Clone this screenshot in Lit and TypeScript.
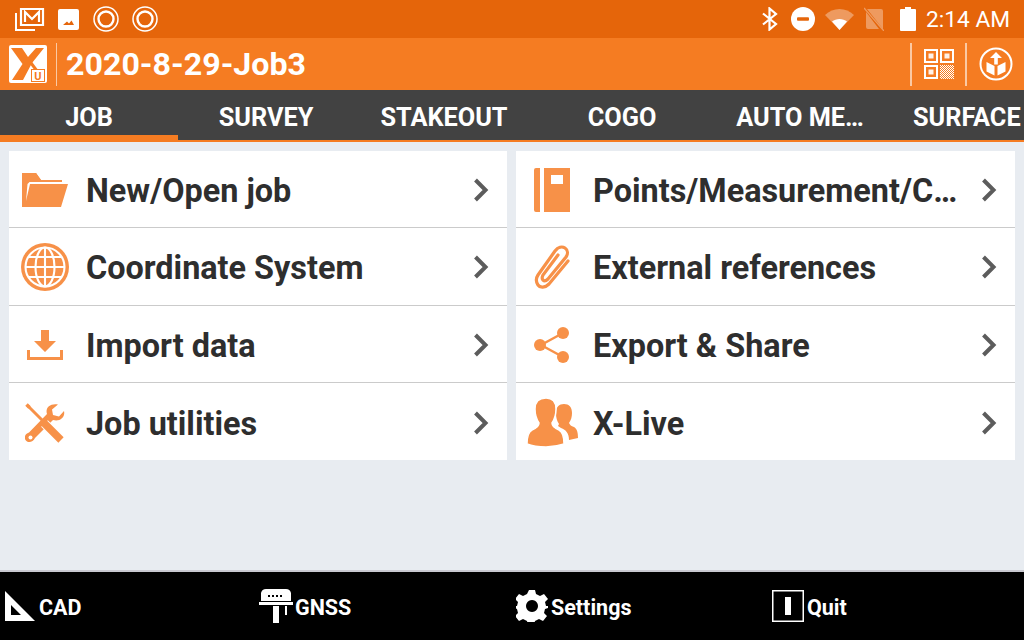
import { LitElement, html, css, svg } from "lit";
import { customElement } from "lit/decorators.js";

const ICONS: Record<string, unknown> = {
  folder: svg`<svg width="48" height="36" viewBox="0 0 48 36"><path fill="#f79148" d="M1 1h14l5 7h21v2H8.500L6.500 12 5 29 9 12h38l-7 23H1z"/><path fill="#f79148" d="M1 1h14l5 7h20v2H8L5.500 11 4 26 1 35z"/></svg>`,
  globe: svg`<svg width="48" height="48" viewBox="0 0 48 48"><circle cx="24" cy="24" r="24" fill="#f79148"/><g fill="none" stroke="#fff" stroke-width="2.100"><circle cx="24" cy="24" r="19.500"/><ellipse cx="24" cy="24" rx="9.500" ry="19.500"/><path d="M24 5v38M5 24h38M8 14h32M8 34h32"/></g></svg>`,
  download: svg`<svg width="38" height="32" viewBox="0 0 38 32"><path fill="#f79148" d="M15 1h8v11h7L19 23 8 12h7zM1 21h3v7h30v-7h3v10H1z"/></svg>`,
  tools: svg`<svg width="40" height="40" viewBox="0 0 40 40">
    <path fill="#f79148" d="M39 8c1.500 6-4 11-11 9L10 35c-2 5-8 5-9.500 2S0 31 4 29.500L22 11C20 5 25 0 33 1.500l-6 5 1 5.500 6 1.500z"/>
    <circle cx="5.500" cy="34.500" r="2" fill="#fff"/>
    <path fill="none" stroke="#fff" stroke-width="9.500" d="M19.500 20.500 37 38"/>
    <path fill="none" stroke="#f79148" stroke-width="3" stroke-linecap="round" d="M3 3l16 16"/>
    <path fill="none" stroke="#f79148" stroke-width="3.500" d="M1.500 1.500l3 3"/>
    <path fill="none" stroke="#f79148" stroke-width="7.500" d="M18.500 19.500 36 37"/>
  </svg>`,
  book: svg`<svg width="36" height="44" viewBox="0 0 36 44"><path fill="#f79148" fill-rule="evenodd" d="M2 0h4v44H2q-2 0-2-2V2q0-2 2-2zM10 0h26v44H10zM17 7v9h12V7z"/></svg>`,
  clip: svg`<svg width="36" height="44" viewBox="0 0 36 44"><path fill="none" stroke="#f79148" stroke-width="3.200" stroke-linecap="round" d="M34 16 15 39c-4 4-9 4-11 1s-2-7 0-10L21 6c3-4 7-5 10-3s3 6 1 9L14 34c-2 2-4 2-5 1s-1-3 0-5l15-20"/></svg>`,
  share: svg`<svg width="36" height="38" viewBox="0 0 36 38"><path fill="none" stroke="#f79148" stroke-width="2.400" d="M29 7 7 19l22 12"/><g fill="#f79148"><circle cx="29" cy="7" r="6"/><circle cx="6" cy="19" r="6"/><circle cx="29" cy="31" r="6"/></g></svg>`,
  people: svg`<svg width="52" height="49" viewBox="0 0 52 49"><path fill="#f79148" d="M38 6c5 0 8 3 8 9 0 4-1 7-3 10 1 2 2 3 5 4 3 2 4 5 4 11l-9 2c0-7-3-10-8-12l-3-2 1-2c-2-3-3-6-3-11 0-6 3-9 8-9z"/><path fill="#f79148" stroke="#fff" stroke-width="1.500" d="M20 0c6 0 10 4 10 11 0 6-2 11-4 14 0 3 2 5 7 7 4 2 5 7 5 14-6 2-12 3-18 3-7 0-14-1-19-3 0-7 1-12 5-14 5-2 7-4 7-7-2-3-4-8-4-14 0-7 4-11 11-11z"/></svg>`,
};

const LEFT = [
  { icon: "folder", label: "New/Open job" },
  { icon: "globe", label: "Coordinate System" },
  { icon: "download", label: "Import data" },
  { icon: "tools", label: "Job utilities" },
];
const RIGHT = [
  { icon: "book", label: "Points/Measurement/C…" },
  { icon: "clip", label: "External references" },
  { icon: "share", label: "Export & Share" },
  { icon: "people", label: "X-Live" },
];
const TABS = ["JOB", "SURVEY", "STAKEOUT", "COGO", "AUTO ME…", "SURFACE"];

@customElement("app-root")
export class AppRoot extends LitElement {
  static styles = css`
    :host {
      display: flex;
      flex-direction: column;
      width: 1024px;
      height: 640px;
      overflow: hidden;
      background: #e8ecf1;
      font-family: Roboto, "Liberation Sans", sans-serif;
      color: #fff;
    }
    .status {
      height: 38px;
      background: #e5650a;
      display: flex;
      align-items: center;
      padding: 0 14px 0 15px;
    }
    .status svg { display: block; }
    .status .left { display: flex; align-items: center; gap: 12.5px; flex: 1; }
    .status .right { display: flex; align-items: center; gap: 10px; }
    .status .right .bt { margin-right: 3px; }
    .status .right .sim { margin-right: 6px; }
    .status .img { margin-right: 2px; }
    .time { font-size: 22.7px; }
    .header {
      height: 52px;
      background: #f57c22;
      display: flex;
      align-items: center;
      padding-left: 9px;
    }
    .title {
      flex: 1;
      font-size: 32.2px;
      font-weight: 700;
      padding-left: 9px;
      margin-left: 9px;
      border-left: 1px solid #fbc9a3;
      line-height: 43px;
    }
    .action {
      width: 55px;
      height: 43px;
      border-left: 2px solid #fbc9a3;
      box-sizing: border-box;
      display: flex;
      align-items: center;
      justify-content: center;
    }
    .action.last { width: 59px; }
    .tabs {
      height: 50px;
      background: #424242;
      display: flex;
      border-bottom: 2px solid #f57c22;
    }
    .tab {
      width: 178px;
      flex: none;
      box-sizing: border-box;
      height: 50px;
      display: flex;
      align-items: center;
      justify-content: center;
      font-size: 25.3px;
      font-weight: 700;
      white-space: nowrap;
      padding: 4px 2px 0 0;
    }
    .tab.active { border-bottom: 5px solid #f57c22; padding: 9px 0 0; }
    .tab:last-child { width: 134px; justify-content: flex-start; padding-left: 23px; }
    .content {
      flex: 1;
      display: grid;
      grid-template-columns: 498px 499px;
      gap: 9px;
      padding: 9px 9px 0;
      align-items: start;
    }
    .card { background: #fff; display: flex; flex-direction: column; }
    .row {
      height: 77.33px;
      box-sizing: border-box;
      display: flex;
      align-items: center;
      border-bottom: 1px solid #cbcbcb;
      color: #2e2e2e;
      padding-top: 2px;
    }
    .row:last-child { border-bottom: none; }
    .icon {
      width: 77px;
      flex: none;
      display: flex;
      align-items: center;
      justify-content: center;
      padding-right: 5px;
      box-sizing: border-box;
    }
    .label {
      flex: 1;
      min-width: 0;
      font-size: 32.4px;
      font-weight: 700;
      white-space: nowrap;
      padding-top: 2px;
    }
    .chev { width: 52px; flex: none; display: flex; justify-content: center; }
    .footer {
      height: 68px;
      background: #000;
      display: flex;
      font-size: 21.5px;
      font-weight: 700;
      border-top: 2px solid #c9c9d0;
      margin-top: -2px;
    }
    .foot {
      width: 256px;
      flex: none;
      box-sizing: border-box;
      padding-left: 4px;
      display: flex;
      align-items: center;
      gap: 3px;
    }
    .foot.gnss { padding-left: 3px; gap: 2px; }
    .foot span { padding-top: 2px; }
  `;

  private statusLeft() {
    return svg`
      <svg width="30" height="24" viewBox="0 0 30 24"><g fill="none" stroke="#fff"><path stroke-width="2.200" d="M6 2h22v16H6zM10 15V5l7 7 7-7v10"/><path stroke-width="2" d="M1 6v17h19"/></g></svg>
      <svg class="img" width="21" height="21" viewBox="0 0 21 21"><path fill="#fff" fill-rule="evenodd" d="M2 0h17q2 0 2 2v17q0 2-2 2H2q-2 0-2-2V2q0-2 2-2zM5 16h11l-2.500-4.500-2.500 3-2-2z"/></svg>
      ${[0, 1].map(
        () => svg`<svg width="26" height="26" viewBox="0 0 26 26"><g fill="none" stroke="#fff"><circle cx="13" cy="13" r="12" stroke-width="1.500"/><circle cx="13" cy="13" r="7.500" stroke-width="2.400"/></g></svg>`
      )}
    `;
  }

  private statusRight() {
    return svg`
      <svg class="bt" width="16" height="24" viewBox="0 0 16 24"><path fill="none" stroke="#fff" stroke-width="2.200" d="M1 6.500 14 17l-6.500 5.500V1.500L14 7 1 17.500"/></svg>
      <svg width="24" height="24" viewBox="0 0 24 24"><circle cx="12" cy="12" r="12" fill="#fff"/><rect x="6" y="10.200" width="12" height="3.600" rx="1" fill="#e5650a"/></svg>
      <svg width="29" height="21" viewBox="0 0 29 21"><path fill="#fff" opacity=".35" d="M0 6c8-8 21-8 29 0L14.500 21z"/><path fill="#fff" d="M7 12.500c4-3.500 11-3.500 15 0L14.500 21z"/></svg>
      <svg class="sim" width="20" height="24" viewBox="0 0 20 24"><path fill="#fff" opacity=".35" d="M3 2h14q2 0 2 2v18L3 2zM2 5l13 17H4q-2 0-2-2z"/><path stroke="#fff" stroke-opacity=".35" stroke-width="1.300" d="M0 1l20 23"/></svg>
      <svg width="16" height="24" viewBox="0 0 16 24"><path fill="#fff" d="M5 0h6v2h4q1 0 1 1v20q0 1-1 1H1q-1 0-1-1V3q0-1 1-1h4z"/></svg>
    `;
  }

  private row(r: { icon: string; label: string }) {
    return html`<div class="row">
      <div class="icon">${ICONS[r.icon]}</div>
      <div class="label">${r.label}</div>
      <div class="chev">
        <svg width="16" height="24" viewBox="0 0 16 24"><path fill="none" stroke="#5c5c5c" stroke-width="4" d="M2.500 2l10 10-10 10"/></svg>
      </div>
    </div>`;
  }

  render() {
    return html`
      <div class="status">
        <div class="left">${this.statusLeft()}</div>
        <div class="right">${this.statusRight()}<span class="time">2:14 AM</span></div>
      </div>
      <div class="header">
        <svg width="38" height="38" viewBox="0 0 38 38">
          <path fill="#fff" d="M2 0h34q2 0 2 2v34q0 2-2 2H2q-2 0-2-2V2q0-2 2-2z"/>
          <path fill="#f57c22" d="M2 3h11l6 9 8-9h8L23 18l-9 17H3l10.500-16z"/>
          <path fill="none" stroke="#f57c22" stroke-width="3" d="M22 18l6 8"/>
          <rect x="22.500" y="24.500" width="13" height="12" fill="#fff" stroke="#f57c22" stroke-width="1"/>
          <text x="29" y="34.500" font-size="11" font-weight="700" text-anchor="middle" fill="#f57c22">U</text>
        </svg>
        <div class="title">2020-8-29-Job3</div>
        <div class="action">
          <svg width="30" height="30" viewBox="0 0 30 30">
            <defs><pattern id="chk" width="2" height="2" patternUnits="userSpaceOnUse"><rect width="1" height="1" fill="#fff"/><rect x="1" y="1" width="1" height="1" fill="#fff"/></pattern></defs>
            <g fill="none" stroke="#fff" stroke-width="2"><rect x="1" y="1" width="12" height="12"/><rect x="17" y="1" width="12" height="12"/><rect x="1" y="17" width="12" height="12"/></g>
            <g fill="#fff"><rect x="4.500" y="4.500" width="5" height="5" opacity=".9"/><rect x="20.500" y="4.500" width="5" height="5" opacity=".9"/><rect x="4.500" y="20.500" width="5" height="5" opacity=".9"/></g>
            <rect x="16" y="16" width="14" height="14" fill="url(#chk)"/>
          </svg>
        </div>
        <div class="action last">
          <svg width="34" height="34" viewBox="0 0 34 34"><circle cx="17" cy="17" r="15.500" fill="none" stroke="#fff" stroke-width="2"/><path fill="#fff" d="M7.500 15l8 4v9.500l-8-4zM26.500 15l-8 4v9.500l8-4zM17 5l6 6h-4.200v6.500h-3.600V11H11z"/></svg>
        </div>
      </div>
      <div class="tabs">
        ${TABS.map(
          (t, i) => html`<div class="tab ${i === 0 ? "active" : ""}">${t}</div>`
        )}
      </div>
      <div class="content">
        <div class="card">${LEFT.map((r) => this.row(r))}</div>
        <div class="card">${RIGHT.map((r) => this.row(r))}</div>
      </div>
      <div class="footer">
        <div class="foot">
          <svg width="32" height="32" viewBox="0 0 32 32"><path fill="#fff" fill-rule="evenodd" d="M1 1l30 30H1zM7 15v10h10z"/></svg>
          <span>CAD</span>
        </div>
        <div class="foot gnss">
          <svg width="34" height="36" viewBox="0 0 34 36"><path fill="#fff" d="M7 1h20q4 0 5 4v8H2V5q1-4 5-4zM0 14h34v3H0zM14 18h6v17h-6zM26 18h2v9h-2z"/><path stroke="#000" stroke-width="2" stroke-dasharray="2 2" d="M9 8h16"/></svg>
          <span>GNSS</span>
        </div>
        <div class="foot">
          <svg width="32" height="32" viewBox="0 0 32 32"><path fill="#fff" fill-rule="evenodd" d="M13 0h6l1 4 4 2 4-2 4 5-3 3 1 4h2v2l-3 1-1 4 3 3-4 5-4-2-4 2-1 4h-6l-1-4-4-2-4 2-4-5 3-3-1-4-2-1v-2h2l1-4-3-3 4-5 4 2 4-2zM16 10a6 6 0 1 0 .01 0z"/></svg>
          <span>Settings</span>
        </div>
        <div class="foot">
          <svg width="32" height="32" viewBox="0 0 32 32"><rect x=".75" y=".75" width="30.500" height="30.500" fill="none" stroke="#fff" stroke-width="1.500"/><rect x="13" y="7" width="6" height="18" fill="#fff"/></svg>
          <span>Quit</span>
        </div>
      </div>
    `;
  }
}
